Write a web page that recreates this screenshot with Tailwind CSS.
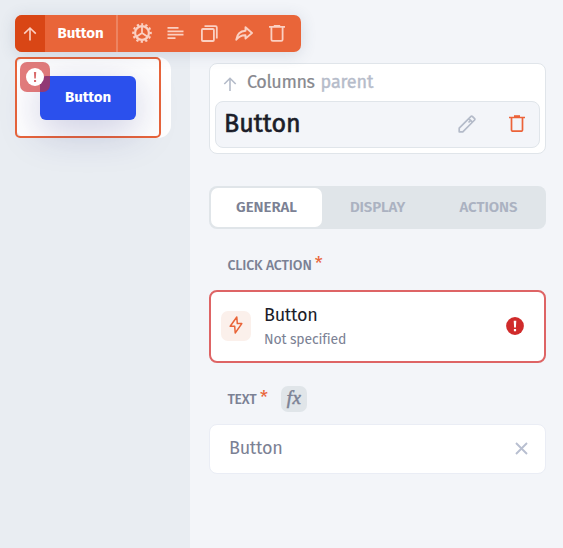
<!DOCTYPE html>
<html lang="en">
<head>
<meta charset="utf-8">
<title>Button settings</title>
<script src="https://cdn.jsdelivr.net/npm/@tailwindcss/browser@4"></script>
</head>
<body class="relative flex h-[548px] w-[563px] overflow-hidden bg-[#f3f5f9] font-['Fira_Sans','Noto_Sans',sans-serif]">
  <!-- Canvas with the selected component -->
  <aside class="w-[190px] shrink-0 bg-[#e9edf2] pt-[57px] pl-[15px]">
    <div class="h-[81px] w-[156px] rounded-[13px] bg-white">
      <div class="relative h-[81px] w-[146px] rounded-[5px] border-2 border-[#e8643a] pt-[17px] pl-[23px]">
        <button class="flex h-11 w-24 items-center justify-center rounded-[6px] bg-[#2b50ed] pb-[2px] text-[15px] font-bold text-white shadow-[0_10px_40px_rgba(38,42,130,0.26)]"><span class="tracking-[-0.1px]">Button</span></button>
        <div class="absolute top-[3px] left-[3px] flex size-[30px] items-center justify-center rounded-[7px] bg-[#d02b2b]/62">
          <svg class="size-[18px]" viewBox="0 0 18 18"><circle cx="9" cy="9" r="9" fill="#fff"/><path d="M7.900 4h2.300l-.4 6.500H8.300zM8 12h2.100v2.100H8z" fill="#d96a6a"/></svg>
        </div>
      </div>
    </div>
  </aside>

  <!-- Floating toolbar -->
  <div class="absolute top-[15px] left-[15px] flex h-[37px] w-[286px] overflow-visible rounded-[7px] bg-[#e96539] text-[#fbd0c2] shadow-[0_2px_16px_rgba(60,80,110,0.16)]">
    <div class="flex w-[30px] items-center justify-center rounded-l-[7px] bg-[#d94615]">
      <svg class="size-4" viewBox="0 0 16 16" fill="none" stroke="currentColor" stroke-width="1.600"><path d="M8 14.500V2M2.200 7.600 8 2l5.800 5.600"/></svg>
    </div>
    <div class="flex w-[73px] items-center justify-center border-r-2 border-[#ed8461] text-[15px] font-bold text-white"><span class="mb-px tracking-[-0.1px]">Button</span></div>
    <div class="flex flex-1 items-center pb-px pl-[14px]">
      <svg class="mr-[15px] size-5" viewBox="0 0 20 20" fill="none" stroke="currentColor"><circle cx="10" cy="10" r="6.900" stroke-width="2.200"/><circle cx="10" cy="10" r="8.800" stroke-width="2" stroke-dasharray="2.300 2.308" stroke-dashoffset="1.150" transform="rotate(-90 10 10)"/><path d="M10 3v7l-5.600 3.800M10 10l5.600 3.800" stroke-width="1.800"/></svg>
      <svg class="mr-[17px] h-3 w-[17px]" viewBox="0 0 17 12" fill="none" stroke="currentColor" stroke-width="1.800"><path d="M.500 .900h11M.500 4.300h16M.500 7.700h16M.500 11.100h8"/></svg>
      <svg class="mr-[17px] size-[17px]" viewBox="0 0 17 17" fill="none" stroke="currentColor" stroke-width="1.800"><rect x=".9" y="4" width="12" height="12" rx="1"/><path d="M3.500 1.200h11a1.300 1.300 0 0 1 1.300 1.300v11"/></svg>
      <svg class="mr-4 h-[15px] w-[18px]" viewBox="0 0 18 15" fill="none" stroke="currentColor" stroke-width="1.900" stroke-linejoin="round"><path d="M10.500 1.200 17 7l-6.500 5.600V9.300C6.500 9 4 10.500 1.300 13.700 2 8.500 5 5.100 10.500 4.800z"/></svg>
      <svg class="h-[17px] w-4" viewBox="0 0 16 17" fill="none" stroke="currentColor" stroke-width="1.800"><path d="M0 1.900h16M4.800 1h6.400M2.400 2v12.600a1.300 1.300 0 0 0 1.300 1.300h8.600a1.300 1.300 0 0 0 1.300-1.300V2"/></svg>
    </div>
  </div>

  <!-- Inspector -->
  <main class="flex flex-1 flex-col pt-[63px] pr-[17px] pl-[19px]">
    <section class="h-[91px] shrink-0 rounded-[8px] border border-[#e0e5ea] bg-white px-[5px]">
      <div class="flex h-[37px] items-center pl-2 text-[18px]">
        <svg class="mt-[2px] mr-[10px] size-[14px] shrink-0" viewBox="0 0 14 14" fill="none" stroke="#b4bbc9" stroke-width="1.600"><path d="M7 14V1.500M1.300 7 7 1.300 12.700 7"/></svg>
        <span class="mr-[6px] mb-px tracking-[-0.4px] text-[#88898f] [-webkit-text-stroke:0.2px_#88898f]">Columns</span>
        <span class="mb-px tracking-[-0.15px] text-[#b6bcca] [-webkit-text-stroke:0.4px_#b6bcca]">parent</span>
      </div>
      <div class="flex h-[47px] items-center rounded-[8px] border border-[#e0e5ea] bg-[#f3f5f9] pr-[14px] pb-px pl-2">
        <h1 class="mt-[2px] mr-auto text-[25px] text-[#1b1d29] [-webkit-text-stroke:0.6px_#1b1d29]">Button</h1>
        <svg class="mr-[33px] size-[18px]" viewBox="0 0 18 18" fill="none" stroke="#b4bbc9" stroke-width="1.700" stroke-linejoin="round"><path d="M1.200 16.800v-3.600L13 1.400a.9.900 0 0 1 1.300 0l2.300 2.300a.9.900 0 0 1 0 1.300L4.800 16.800zM10.800 3.600l3.600 3.600M12 6l-1.500 1.500"/></svg>
        <svg class="mb-px h-[17px] w-4" viewBox="0 0 16 17" fill="none" stroke="#ec6339" stroke-width="1.700"><path d="M0 2.500h16M2.500 3v12a1.200 1.200 0 0 0 1.200 1.200h8.600a1.200 1.200 0 0 0 1.200-1.200V3"/><path d="M5 1.300h6" stroke-width="2.200"/></svg>
      </div>
    </section>

    <nav class="mt-8 flex h-[43px] shrink-0 rounded-[8px] bg-[#e0e5e9] p-[2px] text-[15px] font-semibold text-[#abb2c1]">
      <div class="flex w-[111px] items-center justify-center rounded-[7px] bg-white text-[#7b8194]"><span class="tracking-[-0.05px]">GENERAL</span></div>
      <div class="flex w-[111px] items-center justify-center"><span class="tracking-[-0.1px]">DISPLAY</span></div>
      <div class="flex w-[111px] items-center justify-center"><span class="tracking-[-0.05px]">ACTIONS</span></div>
    </nav>

    <div class="mt-[23px] flex h-[26px] shrink-0 items-center pl-[18.5px] text-[14px] text-[#7b8194]">
      <span class="font-medium tracking-[-0.12px]">CLICK ACTION</span><span class="mb-px ml-[3px] text-[18px] text-[#e96539]">*</span>
    </div>
    <section class="mt-3 flex h-[73px] shrink-0 items-center rounded-[8px] border-2 border-[#de6465] bg-white pr-5 pl-[10px]">
      <div class="mr-[13px] mb-px flex size-[30px] items-center justify-center rounded-[7px] bg-[#fbf0eb]">
        <svg class="mb-[3px] h-[18px] w-[14px]" viewBox="0 0 14 18" fill="none" stroke="#e96539" stroke-width="1.500" stroke-linejoin="round"><path d="M7.800 1 1.200 10.300h4.500L6.200 17l6.600-9.400H8.300z"/></svg>
      </div>
      <div class="mr-auto flex flex-col">
        <span class="text-[18px] leading-6 tracking-[-0.3px] text-[#1b1d29]">Button</span>
        <span class="-mb-px pt-px text-[14px] leading-6 tracking-[-0.15px] text-[#7b8194]">Not specified</span>
      </div>
      <svg class="mb-px size-[18px]" viewBox="0 0 18 18"><circle cx="9" cy="9" r="8.900" fill="#d02b2b"/><path d="M7.700 3.800h2.600L9.900 10.400H8.100zM7.900 12h2.200v2.200H7.900z" fill="#fff"/></svg>
    </section>

    <div class="mt-[23px] flex h-[26px] shrink-0 items-center pl-[18.5px] text-[14px] text-[#7b8194]">
      <span class="w-[29.500px] font-medium tracking-[-0.3px]">TEXT</span><span class="mb-px ml-[3px] w-[8px] text-[18px] text-[#e96539]">*</span>
      <span class="ml-[13px] flex size-[26px] items-center justify-center rounded-[7px] bg-[#e0e5e9] font-['Liberation_Serif',serif] text-[19px] leading-none italic"><span class="mb-[3px] tracking-[0.5px] [-webkit-text-stroke:0.5px_#7b8194]">fx</span></span>
    </div>
    <section class="mt-3 flex h-[50px] shrink-0 items-center rounded-[8px] border border-[#eaedf5] bg-white pr-[17px] pb-[2px] pl-[19px]">
      <span class="mr-auto text-[18px] tracking-[-0.3px] text-[#7b8194]">Button</span>
      <svg class="size-[13px]" viewBox="0 0 13 13" fill="none" stroke="#b8bfd0" stroke-width="1.900"><path d="m1 1 11 11M12 1 1 12"/></svg>
    </section>
  </main>
</body>
</html>
